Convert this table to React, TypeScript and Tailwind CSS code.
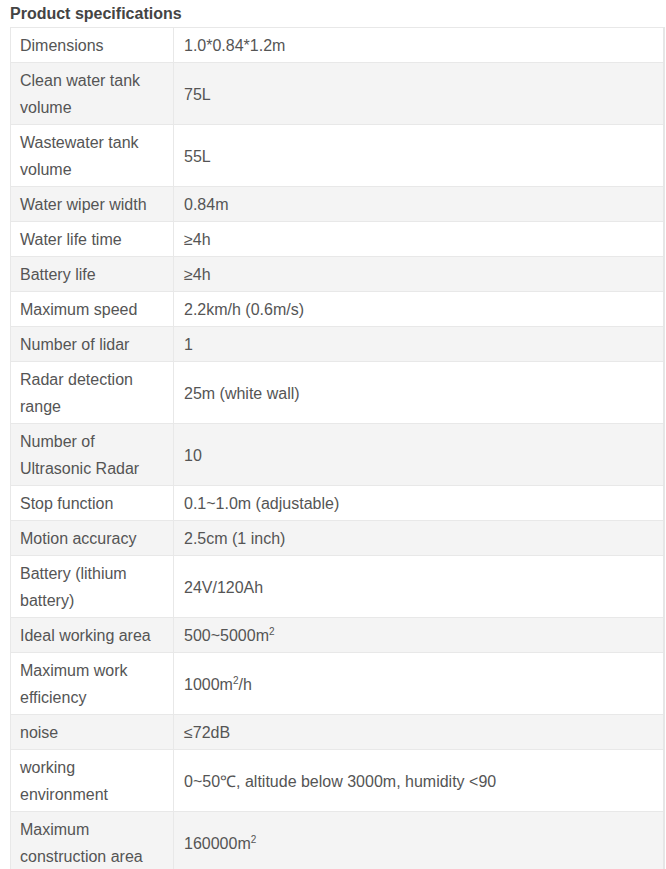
const specs: [string, React.ReactNode][] = [
  ["Dimensions", "1.0*0.84*1.2m"],
  ["Clean water tank volume", "75L"],
  ["Wastewater tank volume", "55L"],
  ["Water wiper width", "0.84m"],
  ["Water life time", "≥4h"],
  ["Battery life", "≥4h"],
  ["Maximum speed", "2.2km/h (0.6m/s)"],
  ["Number of lidar", "1"],
  ["Radar detection range", "25m (white wall)"],
  ["Number of Ultrasonic Radar", "10"],
  ["Stop function", "0.1~1.0m (adjustable)"],
  ["Motion accuracy", "2.5cm (1 inch)"],
  ["Battery (lithium battery)", "24V/120Ah"],
  [
    "Ideal working area",
    <>
      500~5000m<sup className="text-[10px] -top-[6px]">2</sup>
    </>,
  ],
  [
    "Maximum work efficiency",
    <>
      1000m<sup className="text-[10px] -top-[6px]">2</sup>/h
    </>,
  ],
  ["noise", "≤72dB"],
  ["working environment", "0~50℃, altitude below 3000m, humidity <90"],
  [
    "Maximum construction area",
    <>
      160000m<sup className="text-[10px] -top-[6px]">2</sup>
    </>,
  ],
];

export default function App() {
  return (
    <div
      className="bg-white min-h-[869px] text-[#555]"
      style={{ fontFamily: '"Liberation Sans", Arial, sans-serif' }}
    >
      <h3 className="pl-[10px] text-[16px] font-bold leading-[27px] text-[#444]">
        Product specifications
      </h3>
      <table className="ml-[10px] w-[655px] border-collapse border-t border-t-[#d6d6d6] border-r-2 border-r-[#e6e6e6] text-[16px] leading-[27px]">
        <tbody>
          {specs.map(([label, value], i) => (
            <tr key={i} className={i % 2 === 1 ? "bg-[#f4f4f4]" : "bg-white"}>
              <td className="w-[163px] border border-[#e8e8e8] pl-[9px] pr-[8px] pt-[4px] pb-[3px] align-middle">
                {label}
              </td>
              <td className="border border-[#e8e8e8] pl-[10px] pt-[4px] pb-[3px] align-middle">
                {value}
              </td>
            </tr>
          ))}
        </tbody>
      </table>
    </div>
  );
}
